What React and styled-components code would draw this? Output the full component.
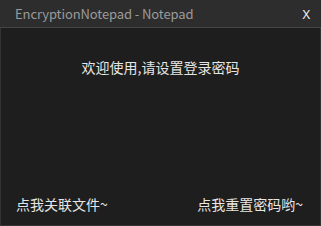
import React from 'react';
import styled, { createGlobalStyle } from 'styled-components';

const GlobalStyle = createGlobalStyle`
  html, body {
    margin: 0;
    padding: 0;
    background: #1e1e1e;
  }
`;

const Window = styled.div`
  width: 321px;
  height: 226px;
  box-sizing: border-box;
  display: flex;
  flex-direction: column;
  background: #1e1e1e;
  font-family: "Microsoft YaHei", "Noto Sans CJK SC", "Noto Sans", sans-serif;
  font-size: 14px;
  overflow: hidden;
`;

const TitleBar = styled.div`
  height: 27px;
  flex-shrink: 0;
  background: #2d2d2d;
  border-bottom: 1px solid #454545;
  display: flex;
  align-items: center;
  justify-content: space-between;
  padding: 0 11px 0 15px;
`;

const Title = styled.span`
  color: #9b9b9b;
  font-size: 13px;
  letter-spacing: -0.1px;
`;

const CloseButton = styled.span`
  color: #f0f0f0;
  font-size: 13px;
  font-family: "Noto Sans", sans-serif;
`;

const Body = styled.div`
  flex: 1;
  display: flex;
  flex-direction: column;
  justify-content: space-between;
  border: 1px solid #333333;
  border-top: none;
  padding: 29px 17px 11px 15px;
`;

const Welcome = styled.div`
  color: #e6e6e6;
  text-align: center;
  padding-left: 2px;
`;

const Footer = styled.div`
  display: flex;
  justify-content: space-between;
`;

const Link = styled.span`
  color: #e6e6e6;
  cursor: pointer;
`;

export default function App() {
  return (
    <>
      <GlobalStyle />
      <Window>
        <TitleBar>
          <Title>EncryptionNotepad - Notepad</Title>
          <CloseButton>X</CloseButton>
        </TitleBar>
        <Body>
          <Welcome>欢迎使用,请设置登录密码</Welcome>
          <Footer>
            <Link>点我关联文件~</Link>
            <Link>点我重置密码哟~</Link>
          </Footer>
        </Body>
      </Window>
    </>
  );
}
